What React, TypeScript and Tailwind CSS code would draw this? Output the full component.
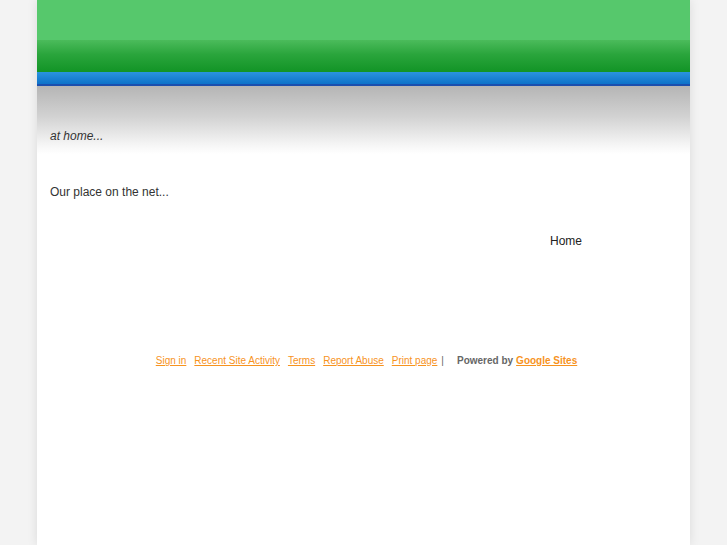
export default function App() {
  const links = ["Sign in", "Recent Site Activity", "Terms", "Report Abuse", "Print page"];
  return (
    <div className="min-h-[545px] bg-[#f3f3f3] font-['Liberation_Sans',Arial,sans-serif]">
      <div className="mx-auto flex min-h-[545px] w-[653px] flex-col bg-white shadow-[0_0_10px_rgba(0,0,0,0.10)]">
        {/* header */}
        <div className="flex h-[72px] flex-col">
          <div className="h-[40px] bg-[#56c86c]" />
          <div className="flex-1 bg-[linear-gradient(#4bbb5b,#2aa53c_45%,#129426)]" />
        </div>
        <div className="h-[14px] border-b-2 border-[#1b4fae] bg-[linear-gradient(#2a94df,#0e72c9)]" />
        <div className="bg-[linear-gradient(#b5b5b5,#d2d2d2_45%,#f4f4f4_85%,#ffffff)] px-[13px] pt-[42px] pb-[10px]">
          <p className="text-[12px] italic leading-[16px] text-[#333]">at home...</p>
        </div>

        {/* body */}
        <div className="flex px-[13px] pt-[30px]">
          <div className="flex-1">
            <p className="text-[12px] leading-[16px] text-[#333]">Our place on the net...</p>
          </div>
          <div className="w-[127px] pt-[49px]">
            <p className="text-[12px] leading-[16px] text-[#222]">Home</p>
          </div>
        </div>

        {/* footer */}
        <div className="mt-[105px] flex items-center justify-center pl-[6px] text-[10px] leading-[14px]">
          {links.map((l) => (
            <a key={l} className="mr-[8px] text-[#f7931e] underline" href="#">
              {l}
            </a>
          ))}
          <span className="-ml-[4px] mr-[13px] text-[#666]">|</span>
          <span className="font-bold text-[#666]">Powered by</span>
          <a className="ml-[3px] font-bold text-[#f7931e] underline" href="#">
            Google Sites
          </a>
        </div>
      </div>
    </div>
  );
}
